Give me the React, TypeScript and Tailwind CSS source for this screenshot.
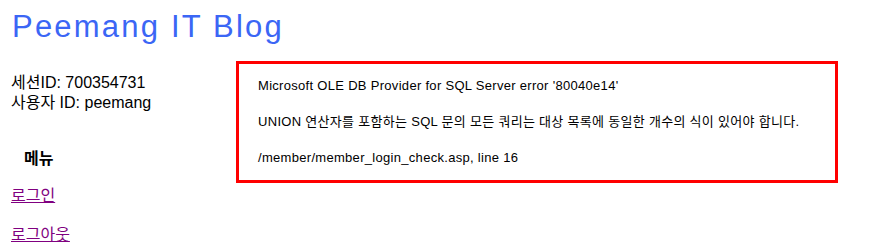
export default function App() {
  const font = { fontFamily: '"Liberation Sans", "Noto Sans CJK KR", sans-serif' };
  return (
    <div className="w-[870px] h-[243px] bg-white text-black overflow-hidden" style={font}>
      <h1 className="pl-3 pt-[9px] h-[61px] text-[31px] leading-[36px] tracking-[2.2px] text-[#3b66f5]">
        Peemang IT Blog
      </h1>
      <div className="flex">
        {/* left menu */}
        <div className="w-[236px] pl-[11px] pt-[12px] shrink-0">
          <div className="text-[16px] leading-[20px]">
            <div>세션ID: 700354731</div>
            <div>사용자 ID: peemang</div>
          </div>
          <div className="mt-[36px] pl-[13px] text-[16px] leading-[20px] font-bold">메뉴</div>
          <a href="#" className="block mt-[17px] text-[16px] leading-[20px] text-[#800080] underline">로그인</a>
          <a href="#" className="block mt-[19px] text-[16px] leading-[20px] text-[#800080] underline">로그아웃</a>
        </div>
        {/* error box */}
        <div className="w-[602px] h-[122px] border-[3px] border-[#ff0000] pl-[19px] pt-[15px] text-[13px] leading-[14px] tracking-[0.3px] flex flex-col gap-[22px]">
          <p>Microsoft OLE DB Provider for SQL Server error '80040e14'</p>
          <p>UNION 연산자를 포함하는 SQL 문의 모든 쿼리는 대상 목록에 동일한 개수의 식이 있어야 합니다.</p>
          <p>/member/member_login_check.asp, line 16</p>
        </div>
      </div>
    </div>
  );
}
